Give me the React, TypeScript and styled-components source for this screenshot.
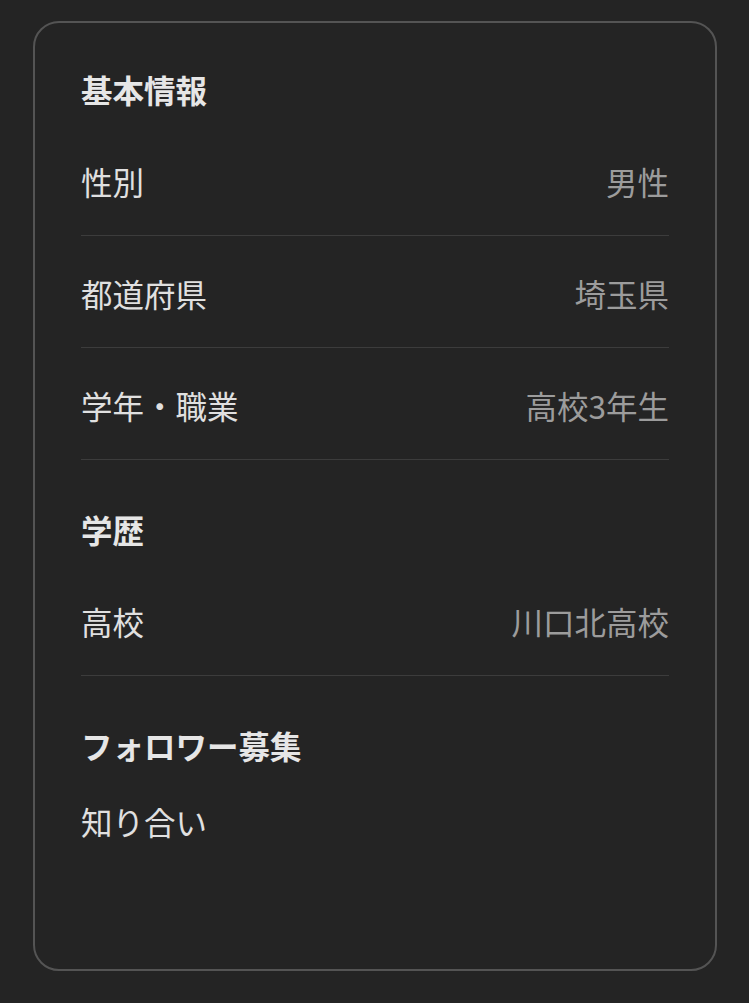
import React from "react";
import styled, { createGlobalStyle } from "styled-components";

const GlobalStyle = createGlobalStyle`
  html, body {
    margin: 0;
    padding: 0;
    background: #242424;
  }
  body {
    font-family: "Noto Sans CJK JP", "Noto Sans", sans-serif;
    color: #e2e2e2;
  }
`;

const Page = styled.div`
  padding: 21px 32px 33px 33px;
  min-height: 1003px;
  box-sizing: border-box;
`;

const Card = styled.div`
  border: 2px solid #545454;
  border-radius: 26px;
  padding: 46px 46px 0 46px;
  height: 950px;
  box-sizing: border-box;
`;

const Section = styled.section<{ $first?: boolean }>`
  margin-top: ${({ $first }) => ($first ? "0" : "49px")};
`;

const Heading = styled.h3`
  margin: 0 0 15px;
  font-size: 31.5px;
  line-height: 40px;
  font-weight: 700;
  color: #e6e6e6;
`;

const Row = styled.div`
  display: flex;
  justify-content: space-between;
  align-items: center;
  padding: 37px 0 34px;
  border-bottom: 1px solid #3c3c3c;
  font-size: 31.5px;
  line-height: 40px;
`;

const Label = styled.span`
  color: #e0e0e0;
`;

const Value = styled.span`
  color: #9c9c9c;
`;

const Text = styled.p`
  margin: 36px 0 0;
  font-size: 31.5px;
  line-height: 40px;
  color: #e0e0e0;
`;

const basicInfo = [
  { label: "性別", value: "男性" },
  { label: "都道府県", value: "埼玉県" },
  { label: "学年・職業", value: "高校3年生" },
];

const App = () => {
  return (
    <>
      <GlobalStyle />
      <Page>
        <Card>
          <Section $first>
            <Heading>基本情報</Heading>
            {basicInfo.map((item) => (
              <Row key={item.label}>
                <Label>{item.label}</Label>
                <Value>{item.value}</Value>
              </Row>
            ))}
          </Section>
          <Section>
            <Heading>学歴</Heading>
            <Row>
              <Label>高校</Label>
              <Value>川口北高校</Value>
            </Row>
          </Section>
          <Section>
            <Heading>フォロワー募集</Heading>
            <Text>知り合い</Text>
          </Section>
        </Card>
      </Page>
    </>
  );
};

export default App;
